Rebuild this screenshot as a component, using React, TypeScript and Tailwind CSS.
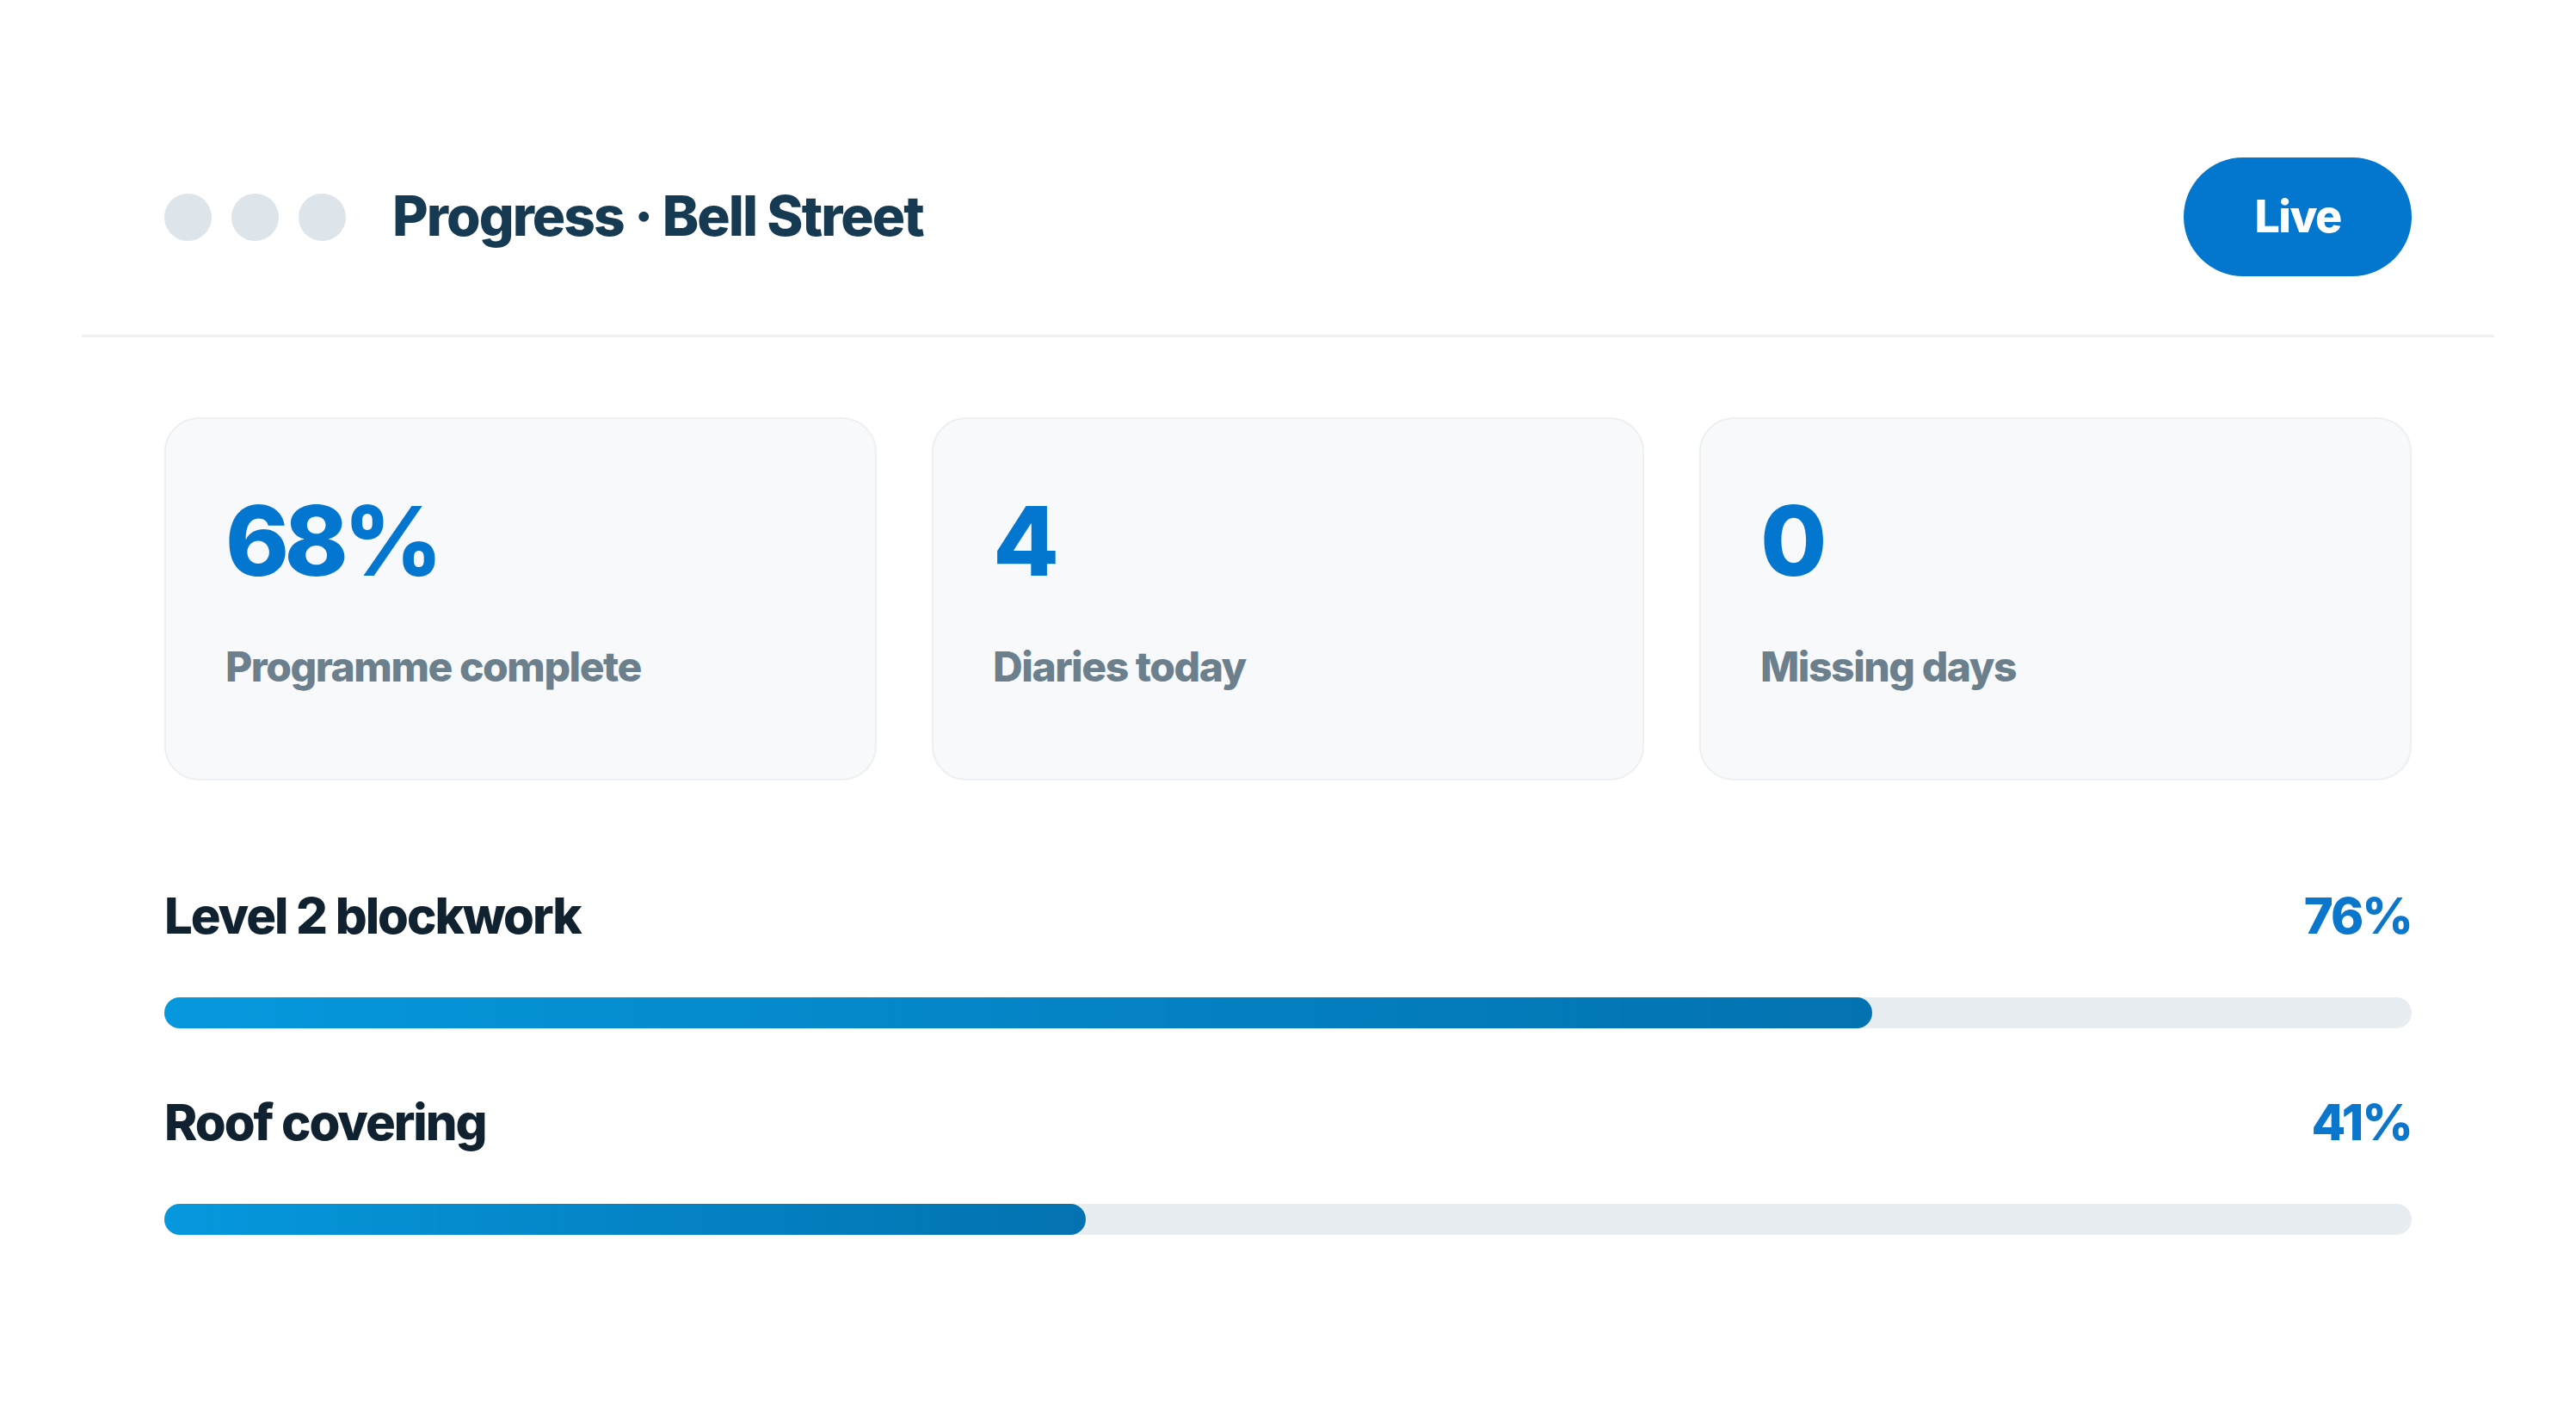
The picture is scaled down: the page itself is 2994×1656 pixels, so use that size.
import React from "react";

type Stat = { value: string; label: string };
type Task = { name: string; percent: number };

const stats: Stat[] = [
  { value: "68%", label: "Programme complete" },
  { value: "4", label: "Diaries today" },
  { value: "0", label: "Missing days" },
];

const tasks: Task[] = [
  { name: "Level 2 blockwork", percent: 76 },
  { name: "Roof covering", percent: 41 },
];

function StatCard({ stat }: { stat: Stat }) {
  return (
    <div className="h-[422px] rounded-[40px] border-2 border-[#edf0f3] bg-[#f7f9fb] px-[69px] pt-[85px]">
      <div className="text-[112px] font-extrabold leading-none tracking-[-0.05em] text-[#0377cf]">
        {stat.value}
      </div>
      <div className="mt-[67px] text-[48px] font-extrabold leading-none tracking-[-0.03em] text-[#6b7f8c]">
        {stat.label}
      </div>
    </div>
  );
}

function TaskRow({ task }: { task: Task }) {
  return (
    <div className="flex flex-col">
      <div className="mt-[4px] flex items-center justify-between text-[58px] font-extrabold leading-none tracking-[-0.035em]">
        <span className="text-[#10212f]">{task.name}</span>
        <span className="text-[#0a77cd]">{task.percent}%</span>
      </div>
      <div className="mt-[66px] h-[36px] w-full rounded-full bg-[#e7edf1]">
        <div
          className="h-full rounded-full bg-gradient-to-r from-[#0698dd] to-[#0372b0]"
          style={{ width: `${task.percent}%` }}
        />
      </div>
    </div>
  );
}

export default function App() {
  return (
    <div
      className="min-h-screen bg-white px-[95px] pt-[183px]"
      style={{ fontFamily: "Inter, 'Noto Sans', sans-serif" }}
    >
      {/* header */}
      <div className="flex items-center justify-between border-b-[3px] border-[#eef1f3] px-[96px] pb-[68px]">
        <div className="flex items-center">
          <div className="flex gap-[23px]">
            <span className="h-[55px] w-[55px] rounded-full bg-[#dde4ea]" />
            <span className="h-[55px] w-[55px] rounded-full bg-[#dde4ea]" />
            <span className="h-[55px] w-[55px] rounded-full bg-[#dde4ea]" />
          </div>
          <h1 className="ml-[54px] -mt-[3px] text-[64px] font-extrabold leading-none tracking-[-0.03em] text-[#163a52]">
            Progress · Bell Street
          </h1>
        </div>
        <button className="flex h-[138px] w-[265px] items-center justify-center rounded-full bg-[#0377cd] text-[52px] font-extrabold tracking-[-0.03em] text-white">
          Live
        </button>
      </div>

      <div className="px-[96px]">
        {/* stats */}
        <div className="mt-[93px] grid grid-cols-3 gap-[64px]">
          {stats.map((s) => (
            <StatCard key={s.label} stat={s} />
          ))}
        </div>

        {/* task progress */}
        <div className="mt-[124px] flex flex-col gap-[76px]">
          {tasks.map((t) => (
            <TaskRow key={t.name} task={t} />
          ))}
        </div>
      </div>
    </div>
  );
}
